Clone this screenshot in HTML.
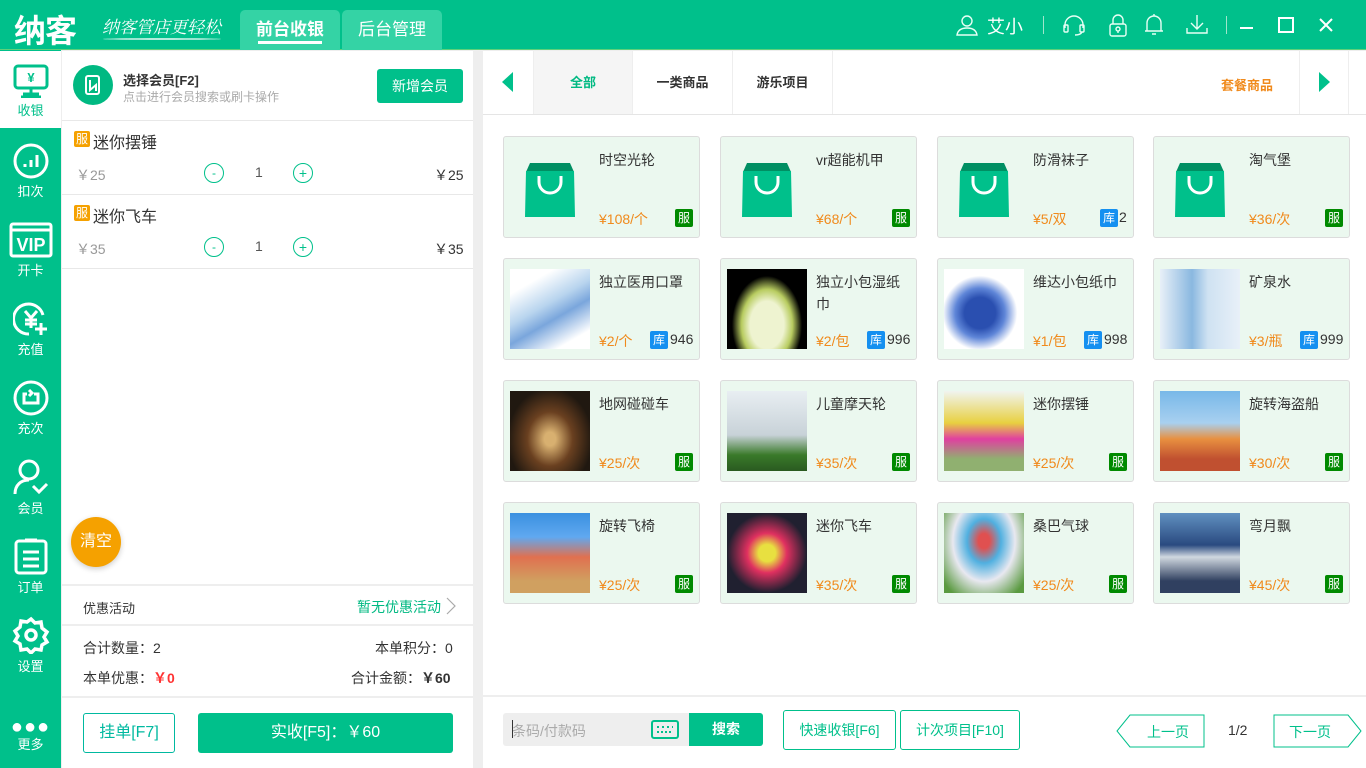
<!DOCTYPE html>
<html><head><meta charset="utf-8"><style>
*{margin:0;padding:0;box-sizing:border-box}
body{width:1366px;height:768px;overflow:hidden;font-family:"Liberation Sans","Noto Sans CJK SC",sans-serif;background:#eee;position:relative;color:#333}
.a{position:absolute}
.hd{left:0;top:0;width:1366px;height:50px;background:#00c08b;border-bottom:1px solid #5fd07a}
.sb{left:0;top:50px;width:61px;height:718px;background:#00c08b}
.nav{position:absolute;left:0;width:61px;text-align:center;color:#fff;font-size:13px}
.nav svg{display:block;margin:0 auto 2px}
.lp{left:62px;top:51px;width:411px;height:717px;background:#fff}
.rp{left:483px;top:51px;width:883px;height:717px;background:#fff}
.card{position:absolute;width:197px;height:102px;background:#ebf8ef;border:1px solid #dcdcdc;border-radius:3px}
.card .im{position:absolute;left:6px;top:10px;width:80px;height:80px}
.card .nm{position:absolute;left:95px;top:12px;font-size:14px;color:#333;width:95px;line-height:22px}
.card .pr{position:absolute;left:95px;top:72px;font-size:14px;color:#f08a1c}
.tg{position:absolute;width:18px;height:18px;font-size:12px;color:#fff;text-align:center;line-height:18px;border-radius:2px}
.g{background:#008a00}.b{background:#1590f0}
.st{position:absolute;font-size:14px;color:#333}
.btn{position:absolute;border:1px solid #00c08b;color:#00c08b;border-radius:3px;text-align:center;font-size:14px;background:#fff}
.ft{position:absolute;width:16px;height:16px;background:#f5a100;color:#fff;font-size:12px;border-radius:2px;display:flex;align-items:center;justify-content:center;line-height:1}
</style></head><body>
<div class="a hd"></div>
<div class="a" style="left:14px;top:6px;font-size:32px;font-weight:bold;color:#fff;letter-spacing:-1px">纳客</div>
<div class="a" style="left:102px;top:13px;font-size:17px;color:#fff;font-style:italic;font-family:'Noto Serif CJK SC',serif">纳客管店更轻松</div>
<div class="a" style="left:103px;top:38px;width:118px;height:2px;background:rgba(255,255,255,.7);border-radius:50%"></div>
<div class="a" style="left:240px;top:10px;width:100px;height:40px;background:#34d3a5;border-radius:5px 5px 0 0;color:#fff;font-size:17px;font-weight:bold;text-align:center;line-height:40px">前台收银</div>
<div class="a" style="left:258px;top:41px;width:64px;height:3px;background:#fff"></div>
<div class="a" style="left:342px;top:10px;width:100px;height:40px;background:#34d3a5;border-radius:5px 5px 0 0;color:#fff;font-size:17px;text-align:center;line-height:40px">后台管理</div>
<svg class="a" style="left:955px;top:13px" width="24" height="24" fill="none" stroke="#e8fff5" stroke-width="1.4"><circle cx="12" cy="8" r="5"/><path d="M2 22c1-6 6-7 10-7s9 1 10 7z"/></svg>
<div class="a" style="left:987px;top:13px;font-size:18px;color:#fff">艾小</div>
<div class="a" style="left:1043px;top:16px;width:1px;height:18px;background:#9ee6cc"></div>
<svg class="a" style="left:1062px;top:14px" width="24" height="22" fill="none" stroke="#e8fff5" stroke-width="1.4"><path d="M3 14V11a9 9 0 0118 0v3"/><rect x="2" y="11" width="4" height="7" rx="1"/><rect x="18" y="11" width="4" height="7" rx="1"/><path d="M20 18c-1 2-4 3-7 3"/></svg>
<svg class="a" style="left:1108px;top:13px" width="20" height="24" fill="none" stroke="#e8fff5" stroke-width="1.4"><path d="M5 11V7a5 5 0 0110 0v4"/><rect x="2" y="11" width="16" height="12" rx="2"/><circle cx="10" cy="16" r="2"/><path d="M10 18v2"/></svg>
<svg class="a" style="left:1143px;top:12px" width="22" height="24" fill="none" stroke="#e8fff5" stroke-width="1.4"><path d="M4 19V11a7 7 0 0114 0v8zM2 19h18M9 22h4M11 2v2"/></svg>
<svg class="a" style="left:1185px;top:13px" width="24" height="22" fill="none" stroke="#e8fff5" stroke-width="1.4"><path d="M12 2v13M6 10l6 6 6-6M2 15v5h20v-5"/></svg>
<div class="a" style="left:1226px;top:16px;width:1px;height:18px;background:#9ee6cc"></div>
<div class="a" style="left:1240px;top:27px;width:13px;height:2px;background:#fff"></div>
<div class="a" style="left:1278px;top:17px;width:16px;height:16px;border:2px solid #fff"></div>
<svg class="a" style="left:1319px;top:18px" width="14" height="14" stroke="#fff" stroke-width="2"><path d="M1 1l12 12M13 1L1 13"/></svg>

<div class="a sb"></div>
<div class="a" style="left:0;top:51px;width:61px;height:77px;background:#fff"></div>
<div class="nav" style="top:64px;color:#00c08b"><svg width="36" height="34" fill="none" stroke="#00c08b" stroke-width="3"><rect x="2" y="2" width="32" height="22" rx="3"/><path d="M10 30h16M18 24v6M8 33h20"/><text x="18" y="18" font-size="13" fill="#00c08b" stroke="none" text-anchor="middle" font-weight="bold">¥</text></svg>收银</div>
<div class="nav" style="top:143px"><svg width="36" height="36" fill="none" stroke="#fff" stroke-width="3"><circle cx="18" cy="18" r="16"/><path d="M12 21v3M18 17v7M24 12v12"/></svg>扣次</div>
<div class="nav" style="top:222px"><svg width="44" height="36" fill="none" stroke="#fff" stroke-width="3"><rect x="2" y="2" width="40" height="32" rx="2"/><path d="M2 8h40"/><text x="22" y="29" font-size="18" font-weight="bold" fill="#fff" stroke="none" text-anchor="middle">VIP</text></svg>开卡</div>
<div class="nav" style="top:301px"><svg width="36" height="36" fill="none" stroke="#fff" stroke-width="3"><path d="M30 14A15 15 0 1016 33"/><path d="M22 28h12M28 22v12M12 10l6 7 6-7M18 17v10M12 19h12M12 23h12"/></svg>充值</div>
<div class="nav" style="top:380px"><svg width="36" height="36" fill="none" stroke="#fff" stroke-width="3"><circle cx="18" cy="18" r="16"/><path d="M14 14h-3v9h14v-9h-4M16 10l3 3-3 3"/></svg>充次</div>
<div class="nav" style="top:458px"><svg width="36" height="38" fill="none" stroke="#fff" stroke-width="3"><circle cx="16" cy="12" r="9"/><path d="M2 36c0-9 6-14 14-14M20 28l6 6 8-8"/></svg>会员</div>
<div class="nav" style="top:537px"><svg width="36" height="38" fill="none" stroke="#fff" stroke-width="3"><rect x="3" y="4" width="30" height="32" rx="3"/><path d="M12 3h12M10 15h16M10 22h16M10 29h16"/></svg>订单</div>
<div class="nav" style="top:616px"><svg width="38" height="38" fill="none" stroke="#fff" stroke-width="3.5"><path d="M19 3l4 4 6-1 1 6 5 4-3 5 3 5-5 3-1 5-6-1-4 4-4-4-6 1-1-6-5-3 3-5-3-5 5-4 1-6 6 1z"/><circle cx="19" cy="19" r="5"/></svg>设置</div>
<div class="nav" style="top:720px"><div style="font-size:20px;letter-spacing:1px;line-height:14px">●●●</div>更多</div>

<div class="a lp"></div>
<div class="a" style="left:73px;top:65px;width:40px;height:40px;border-radius:50%;background:#00b982"></div>
<svg class="a" style="left:83px;top:74px" width="20" height="22" fill="none" stroke="#fff" stroke-width="2"><rect x="3" y="2" width="13" height="18" rx="2"/><path d="M7 6v10l6-5v6"/></svg>
<div class="a" style="left:123px;top:70px;font-size:13px;font-weight:bold;color:#333">选择会员[F2]</div>
<div class="a" style="left:123px;top:88px;font-size:12px;color:#aaa">点击进行会员搜索或刷卡操作</div>
<div class="a" style="left:377px;top:69px;width:86px;height:34px;background:#00c08b;border-radius:3px;color:#fff;font-size:14px;text-align:center;line-height:34px">新增会员</div>
<div class="a" style="left:62px;top:120px;width:411px;height:1px;background:#e8e8e8"></div>
<div class="ft" style="left:74px;top:131px">服</div>
<div class="a" style="left:93px;top:129px;font-size:16px;color:#333">迷你摆锤</div>
<div class="a" style="left:76px;top:165px;font-size:14px;color:#999">￥25</div>
<div class="a" style="left:204px;top:163px;width:20px;height:20px;border:1px solid #00c08b;border-radius:50%;color:#00c08b;text-align:center;font-size:12px;line-height:18px">-</div>
<div class="a" style="left:255px;top:164px;font-size:14px;color:#555">1</div>
<div class="a" style="left:293px;top:163px;width:20px;height:20px;border:1px solid #00c08b;border-radius:50%;color:#00c08b;text-align:center;font-size:14px;line-height:18px">+</div>
<div class="a" style="left:434px;top:165px;font-size:14px;color:#333">￥25</div>
<div class="a" style="left:62px;top:194px;width:411px;height:1px;background:#e8e8e8"></div>
<div class="ft" style="left:74px;top:205px">服</div>
<div class="a" style="left:93px;top:203px;font-size:16px;color:#333">迷你飞车</div>
<div class="a" style="left:76px;top:239px;font-size:14px;color:#999">￥35</div>
<div class="a" style="left:204px;top:237px;width:20px;height:20px;border:1px solid #00c08b;border-radius:50%;color:#00c08b;text-align:center;font-size:12px;line-height:18px">-</div>
<div class="a" style="left:255px;top:238px;font-size:14px;color:#555">1</div>
<div class="a" style="left:293px;top:237px;width:20px;height:20px;border:1px solid #00c08b;border-radius:50%;color:#00c08b;text-align:center;font-size:14px;line-height:18px">+</div>
<div class="a" style="left:434px;top:239px;font-size:14px;color:#333">￥35</div>
<div class="a" style="left:62px;top:268px;width:411px;height:1px;background:#e8e8e8"></div>
<div class="a" style="left:71px;top:517px;width:50px;height:50px;border-radius:50%;background:#f5a100;color:#fff;font-size:16px;text-align:center;line-height:50px;box-shadow:0 2px 6px rgba(0,0,0,.2)">清空</div>
<div class="a" style="left:62px;top:584px;width:411px;height:2px;background:#eee"></div>
<div class="a" style="left:83px;top:598px;font-size:13px;color:#333">优惠活动</div>
<div class="a" style="left:357px;top:597px;font-size:14px;color:#00b982">暂无优惠活动</div>
<svg class="a" style="left:446px;top:597px" width="10" height="18" fill="none" stroke="#aaa" stroke-width="1.2"><path d="M1 1l8 8-8 8"/></svg>
<div class="a" style="left:62px;top:624px;width:411px;height:2px;background:#eee"></div>
<div class="a" style="left:83px;top:638px;font-size:14px;color:#333">合计数量：2</div>
<div class="a" style="left:375px;top:638px;font-size:14px;color:#333">本单积分：0</div>
<div class="a" style="left:83px;top:668px;font-size:14px;color:#333">本单优惠：<b style="color:#f33">￥0</b></div>
<div class="a" style="left:351px;top:668px;font-size:14px;color:#333">合计金额：<b>￥60</b></div>
<div class="a" style="left:62px;top:696px;width:411px;height:2px;background:#eee"></div>
<div class="btn" style="left:83px;top:713px;width:92px;height:40px;line-height:38px;font-size:16px;color:#00b9a0;border-color:#00b9a0">挂单[F7]</div>
<div class="a" style="left:198px;top:713px;width:255px;height:40px;background:#00c08b;border-radius:3px;color:#fff;font-size:16px;text-align:center;line-height:40px">实收[F5]：￥60</div>

<div class="a rp"></div>
<div class="a" style="left:483px;top:114px;width:883px;height:1px;background:#e5e5e5"></div>
<div class="a" style="left:533px;top:51px;width:100px;height:63px;background:#f5f5f5;border-left:1px solid #eee;border-right:1px solid #eee;color:#00b982;font-size:13px;font-weight:bold;text-align:center;line-height:63px">全部</div>
<div class="a" style="left:633px;top:51px;width:100px;height:63px;border-right:1px solid #eee;font-size:13px;font-weight:bold;text-align:center;line-height:63px">一类商品</div>
<div class="a" style="left:733px;top:51px;width:100px;height:63px;border-right:1px solid #eee;font-size:13px;font-weight:bold;text-align:center;line-height:63px">游乐项目</div>
<div class="a" style="left:1221px;top:75px;font-size:13px;font-weight:bold;color:#f08a1c">套餐商品</div>
<div class="a" style="left:1299px;top:51px;width:50px;height:63px;border-left:1px solid #eee;border-right:1px solid #eee"></div>
<svg class="a" style="left:502px;top:72px" width="12" height="20"><path d="M11 0v20L0 10z" fill="#00c08b"/></svg>
<svg class="a" style="left:1319px;top:72px" width="12" height="20"><path d="M0 0v20l11-10z" fill="#00c08b"/></svg>

<div class="card" style="left:503px;top:136px"><svg class="im" viewBox="0 0 80 80"><path d="M20 16h40l4 9H16z" fill="#008f63"/><path d="M16 24h48l1 46H15z" fill="#00c08b"/><path d="M29 29v6a11 11 0 0022 0v-6" stroke="#fff" stroke-width="3" fill="none"/></svg><div class="nm">时空光轮</div><div class="pr">¥108/个</div><div class="tg g" style="left:171px;top:72px">服</div></div>
<div class="card" style="left:720px;top:136px"><svg class="im" viewBox="0 0 80 80"><path d="M20 16h40l4 9H16z" fill="#008f63"/><path d="M16 24h48l1 46H15z" fill="#00c08b"/><path d="M29 29v6a11 11 0 0022 0v-6" stroke="#fff" stroke-width="3" fill="none"/></svg><div class="nm">vr超能机甲</div><div class="pr">¥68/个</div><div class="tg g" style="left:171px;top:72px">服</div></div>
<div class="card" style="left:937px;top:136px"><svg class="im" viewBox="0 0 80 80"><path d="M20 16h40l4 9H16z" fill="#008f63"/><path d="M16 24h48l1 46H15z" fill="#00c08b"/><path d="M29 29v6a11 11 0 0022 0v-6" stroke="#fff" stroke-width="3" fill="none"/></svg><div class="nm">防滑袜子</div><div class="pr">¥5/双</div><div class="tg b" style="left:162px;top:72px">库</div><div class="st" style="left:181px;top:72px">2</div></div>
<div class="card" style="left:1153px;top:136px"><svg class="im" viewBox="0 0 80 80"><path d="M20 16h40l4 9H16z" fill="#008f63"/><path d="M16 24h48l1 46H15z" fill="#00c08b"/><path d="M29 29v6a11 11 0 0022 0v-6" stroke="#fff" stroke-width="3" fill="none"/></svg><div class="nm">淘气堡</div><div class="pr">¥36/次</div><div class="tg g" style="left:171px;top:72px">服</div></div>

<div class="card" style="left:503px;top:258px"><div class="im" style="background:linear-gradient(150deg,#fff 20%,#b8d4ee 45%,#7aa6dc 60%,#fff 85%)"></div><div class="nm">独立医用口罩</div><div class="pr">¥2/个</div><div class="tg b" style="left:146px;top:72px">库</div><div class="st" style="left:166px;top:72px">946</div></div>
<div class="card" style="left:720px;top:258px"><div class="im" style="background:radial-gradient(ellipse at 50% 70%,#eef3d0 30%,#b8cc60 45%,#000 62%)"></div><div class="nm">独立小包湿纸巾</div><div class="pr">¥2/包</div><div class="tg b" style="left:146px;top:72px">库</div><div class="st" style="left:166px;top:72px">996</div></div>
<div class="card" style="left:937px;top:258px"><div class="im" style="background:radial-gradient(ellipse at 45% 55%,#2a4fb0 25%,#5f86d8 40%,#fff 60%)"></div><div class="nm">维达小包纸巾</div><div class="pr">¥1/包</div><div class="tg b" style="left:146px;top:72px">库</div><div class="st" style="left:166px;top:72px">998</div></div>
<div class="card" style="left:1153px;top:258px"><div class="im" style="background:linear-gradient(90deg,#e8f0f8,#8ab8e0 40%,#cfe2f2 60%,#e8f0f8)"></div><div class="nm">矿泉水</div><div class="pr">¥3/瓶</div><div class="tg b" style="left:146px;top:72px">库</div><div class="st" style="left:166px;top:72px">999</div></div>

<div class="card" style="left:503px;top:380px"><div class="im" style="background:radial-gradient(ellipse at 50% 60%,#d8b070 10%,#6a4020 40%,#201810 75%)"></div><div class="nm">地网碰碰车</div><div class="pr">¥25/次</div><div class="tg g" style="left:171px;top:72px">服</div></div>
<div class="card" style="left:720px;top:380px"><div class="im" style="background:linear-gradient(180deg,#e8eef2 0%,#c8d2d8 55%,#3a7a2a 80%,#2a5a20)"></div><div class="nm">儿童摩天轮</div><div class="pr">¥35/次</div><div class="tg g" style="left:171px;top:72px">服</div></div>
<div class="card" style="left:937px;top:380px"><div class="im" style="background:linear-gradient(180deg,#f0f4f0 0%,#e8d040 40%,#e040a0 60%,#90b070 85%)"></div><div class="nm">迷你摆锤</div><div class="pr">¥25/次</div><div class="tg g" style="left:171px;top:72px">服</div></div>
<div class="card" style="left:1153px;top:380px"><div class="im" style="background:linear-gradient(180deg,#78b8e8 0%,#a8d0f0 40%,#e89040 60%,#c05030 85%)"></div><div class="nm">旋转海盗船</div><div class="pr">¥30/次</div><div class="tg g" style="left:171px;top:72px">服</div></div>

<div class="card" style="left:503px;top:502px"><div class="im" style="background:linear-gradient(180deg,#3a90e0 0%,#60a8f0 30%,#e07050 55%,#d0a060 85%)"></div><div class="nm">旋转飞椅</div><div class="pr">¥25/次</div><div class="tg g" style="left:171px;top:72px">服</div></div>
<div class="card" style="left:720px;top:502px"><div class="im" style="background:radial-gradient(ellipse at 50% 50%,#e8e040 15%,#e03060 35%,#202030 70%)"></div><div class="nm">迷你飞车</div><div class="pr">¥35/次</div><div class="tg g" style="left:171px;top:72px">服</div></div>
<div class="card" style="left:937px;top:502px"><div class="im" style="background:radial-gradient(ellipse at 50% 35%,#e05050 10%,#50b0e0 30%,#e8e8f0 55%,#5a9a40 90%)"></div><div class="nm">桑巴气球</div><div class="pr">¥25/次</div><div class="tg g" style="left:171px;top:72px">服</div></div>
<div class="card" style="left:1153px;top:502px"><div class="im" style="background:linear-gradient(180deg,#6090c0 0%,#2a4a80 40%,#d0d8e0 55%,#304060 85%)"></div><div class="nm">弯月飘</div><div class="pr">¥45/次</div><div class="tg g" style="left:171px;top:72px">服</div></div>

<div class="a" style="left:483px;top:695px;width:883px;height:2px;background:#eee"></div>
<div class="a" style="left:503px;top:713px;width:186px;height:33px;background:#eee;border-radius:3px 0 0 3px"></div>
<div class="a" style="left:512px;top:721px;font-size:14px;color:#aaa">条码/付款码</div>
<div class="a" style="left:512px;top:720px;width:1px;height:18px;background:#333"></div>
<svg class="a" style="left:651px;top:720px" width="28" height="19" fill="none" stroke="#00c08b" stroke-width="2"><rect x="1" y="1" width="26" height="17" rx="2"/><path d="M6 7h2M11 7h2M16 7h2M21 7h1M6 12h16" stroke-dasharray="2 2"/></svg>
<div class="a" style="left:689px;top:713px;width:74px;height:33px;background:#00c08b;color:#fff;font-size:14px;font-weight:bold;text-align:center;line-height:33px;border-radius:0 3px 3px 0">搜索</div>
<div class="btn" style="left:783px;top:710px;width:113px;height:40px;line-height:38px">快速收银[F6]</div>
<div class="btn" style="left:900px;top:710px;width:120px;height:40px;line-height:38px">计次项目[F10]</div>
<svg class="a" style="left:1116px;top:714px" width="89" height="34"><path d="M14 1H88V33H14L1 17z" fill="#fff" stroke="#00c08b"/><text x="52" y="23" font-size="14" fill="#00c08b" text-anchor="middle" font-family="Liberation Sans,Noto Sans CJK SC">上一页</text></svg>
<div class="a" style="left:1228px;top:722px;font-size:14px;color:#333">1/2</div>
<svg class="a" style="left:1273px;top:714px" width="89" height="34"><path d="M1 1H75L88 17L75 33H1z" fill="#fff" stroke="#00c08b"/><text x="37" y="23" font-size="14" fill="#00c08b" text-anchor="middle" font-family="Liberation Sans,Noto Sans CJK SC">下一页</text></svg>
</body></html>
